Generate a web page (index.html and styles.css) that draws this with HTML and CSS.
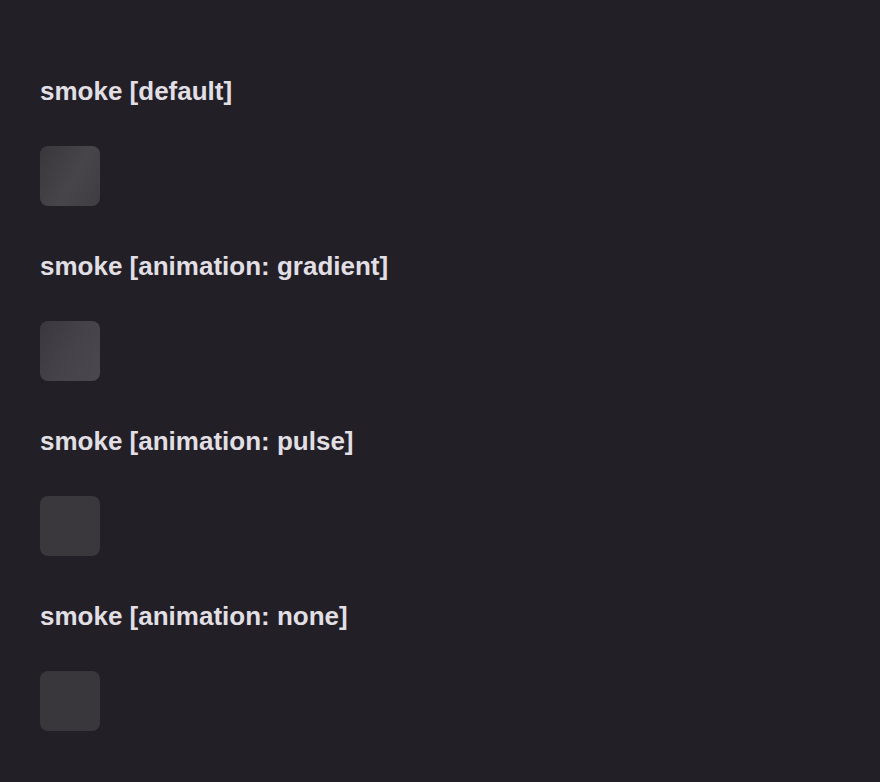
FILE: index.html
```html
<!DOCTYPE html>
<html>
<head>
<meta charset="utf-8">
<link rel="stylesheet" href="styles.css">
</head>
<body>
<main class="page">
  <section class="demo">
    <h2 class="demo-title">smoke [default]</h2>
    <div class="skeleton skeleton--gradient"></div>
  </section>
  <section class="demo">
    <h2 class="demo-title">smoke [animation: gradient]</h2>
    <div class="skeleton skeleton--gradient2"></div>
  </section>
  <section class="demo">
    <h2 class="demo-title">smoke [animation: pulse]</h2>
    <div class="skeleton skeleton--pulse"></div>
  </section>
  <section class="demo">
    <h2 class="demo-title">smoke [animation: none]</h2>
    <div class="skeleton skeleton--none"></div>
  </section>
</main>
</body>
</html>
```
FILE: styles.css
```css
html, body {
  margin: 0;
  padding: 0;
  background: #222026;
}
body {
  font-family: "Liberation Sans", Arial, sans-serif;
  color: #e1dfe4;
}
.page {
  display: flex;
  flex-direction: column;
  gap: 45px;
  padding: 76px 40px 40px;
}
.demo {
  display: flex;
  flex-direction: column;
  gap: 40px;
}
.demo-title {
  margin: 0;
  font-size: 26px;
  font-weight: 700;
  line-height: 30px;
}
.skeleton {
  width: 60px;
  height: 60px;
  border-radius: 8px;
  background: #39363c;
}
.skeleton--gradient {
  background: linear-gradient(120deg, #39363c 0%, #47444a 55%, #3f3c42 100%);
}
.skeleton--gradient2 {
  background: linear-gradient(120deg, #3a373d 0%, #45424a 50%, #4a474d 100%);
}
.skeleton--pulse {
  background: #3a373d;
}
.skeleton--none {
  background: #39363c;
}
```
